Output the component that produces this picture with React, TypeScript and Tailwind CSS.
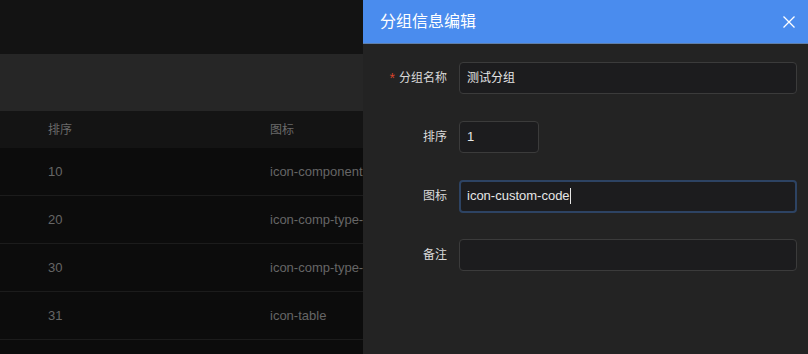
import React from "react";

const rows = [
  { sort: "10", icon: "icon-component" },
  { sort: "20", icon: "icon-comp-type-" },
  { sort: "30", icon: "icon-comp-type-" },
  { sort: "31", icon: "icon-table" },
];

const font = { fontFamily: '"Liberation Sans", "Noto Sans CJK SC", sans-serif' };

function Field({
  label,
  required,
  children,
}: {
  label: string;
  required?: boolean;
  children: React.ReactNode;
}) {
  return (
    <div className="flex items-center h-[32px]">
      <div className="w-[84px] shrink-0 flex justify-end items-center pr-[12px] text-[12px] text-[#dadada]">
        {required && <span className="text-[#d9432c] mr-[4px] text-[14px] leading-none">*</span>}
        {label}
      </div>
      {children}
    </div>
  );
}

export default function App() {
  return (
    <div className="relative w-[808px] h-[354px] overflow-hidden bg-[#0c0c0c]" style={font}>
      {/* page under the mask */}
      <div className="flex flex-col">
        <div className="h-[54px] bg-[#131313]" />
        <div className="h-[57px] bg-[#262626]" />
        <div className="h-[37px] bg-[#141414] flex items-center text-[12px] text-[#6a6a6a]">
          <div className="w-[270px] pl-[48px]">排序</div>
          <div>图标</div>
        </div>
        {rows.map((r, i) => (
          <div
            key={i}
            className="h-[48px] border-b border-[#1c1c1c] flex items-center text-[13px] text-[#666666]"
          >
            <div className="w-[270px] pl-[48px]">{r.sort}</div>
            <div className="whitespace-nowrap">{r.icon}</div>
          </div>
        ))}
      </div>

      {/* drawer */}
      <div className="absolute top-0 right-0 w-[445px] h-full bg-[#232323] flex flex-col">
        <div className="h-[44px] bg-[#4a8cee] border-b border-[#5f7ea8] flex items-center justify-between pl-[17px] pr-[13px]">
          <span className="text-[16px] text-white">分组信息编辑</span>
          <svg width="12" height="12" viewBox="0 0 12 12">
            <path d="M0.5 0.5 L11.5 11.5 M11.5 0.5 L0.5 11.5" stroke="#ffffff" strokeWidth="1.3" fill="none" />
          </svg>
        </div>
        <div className="flex flex-col gap-[27px] pt-[18px] pl-[12px] pr-[11px]">
          <Field label="分组名称" required>
            <div className="flex-1 h-[32px] rounded-[4px] border border-[#3b3b3b] bg-[#1c1c1e] flex items-center px-[7px] text-[12px] text-[#e6e6e6]">
              测试分组
            </div>
          </Field>
          <Field label="排序">
            <div className="w-[80px] h-[32px] rounded-[4px] border border-[#3b3b3b] bg-[#1c1c1e] flex items-center px-[7px] text-[13px] text-[#e6e6e6]">
              1
            </div>
          </Field>
          <Field label="图标">
            <div className="flex-1 h-[33px] rounded-[4px] border-2 border-[#2d4363] bg-[#1c1c1e] flex items-center px-[6px] text-[13px] text-[#e6e6e6]">
              icon-custom-code
              <span className="inline-block w-[1px] h-[16px] bg-[#e6e6e6]" />
            </div>
          </Field>
          <Field label="备注">
            <div className="flex-1 h-[32px] rounded-[4px] border border-[#3b3b3b] bg-[#1c1c1e]" />
          </Field>
        </div>
      </div>
    </div>
  );
}
